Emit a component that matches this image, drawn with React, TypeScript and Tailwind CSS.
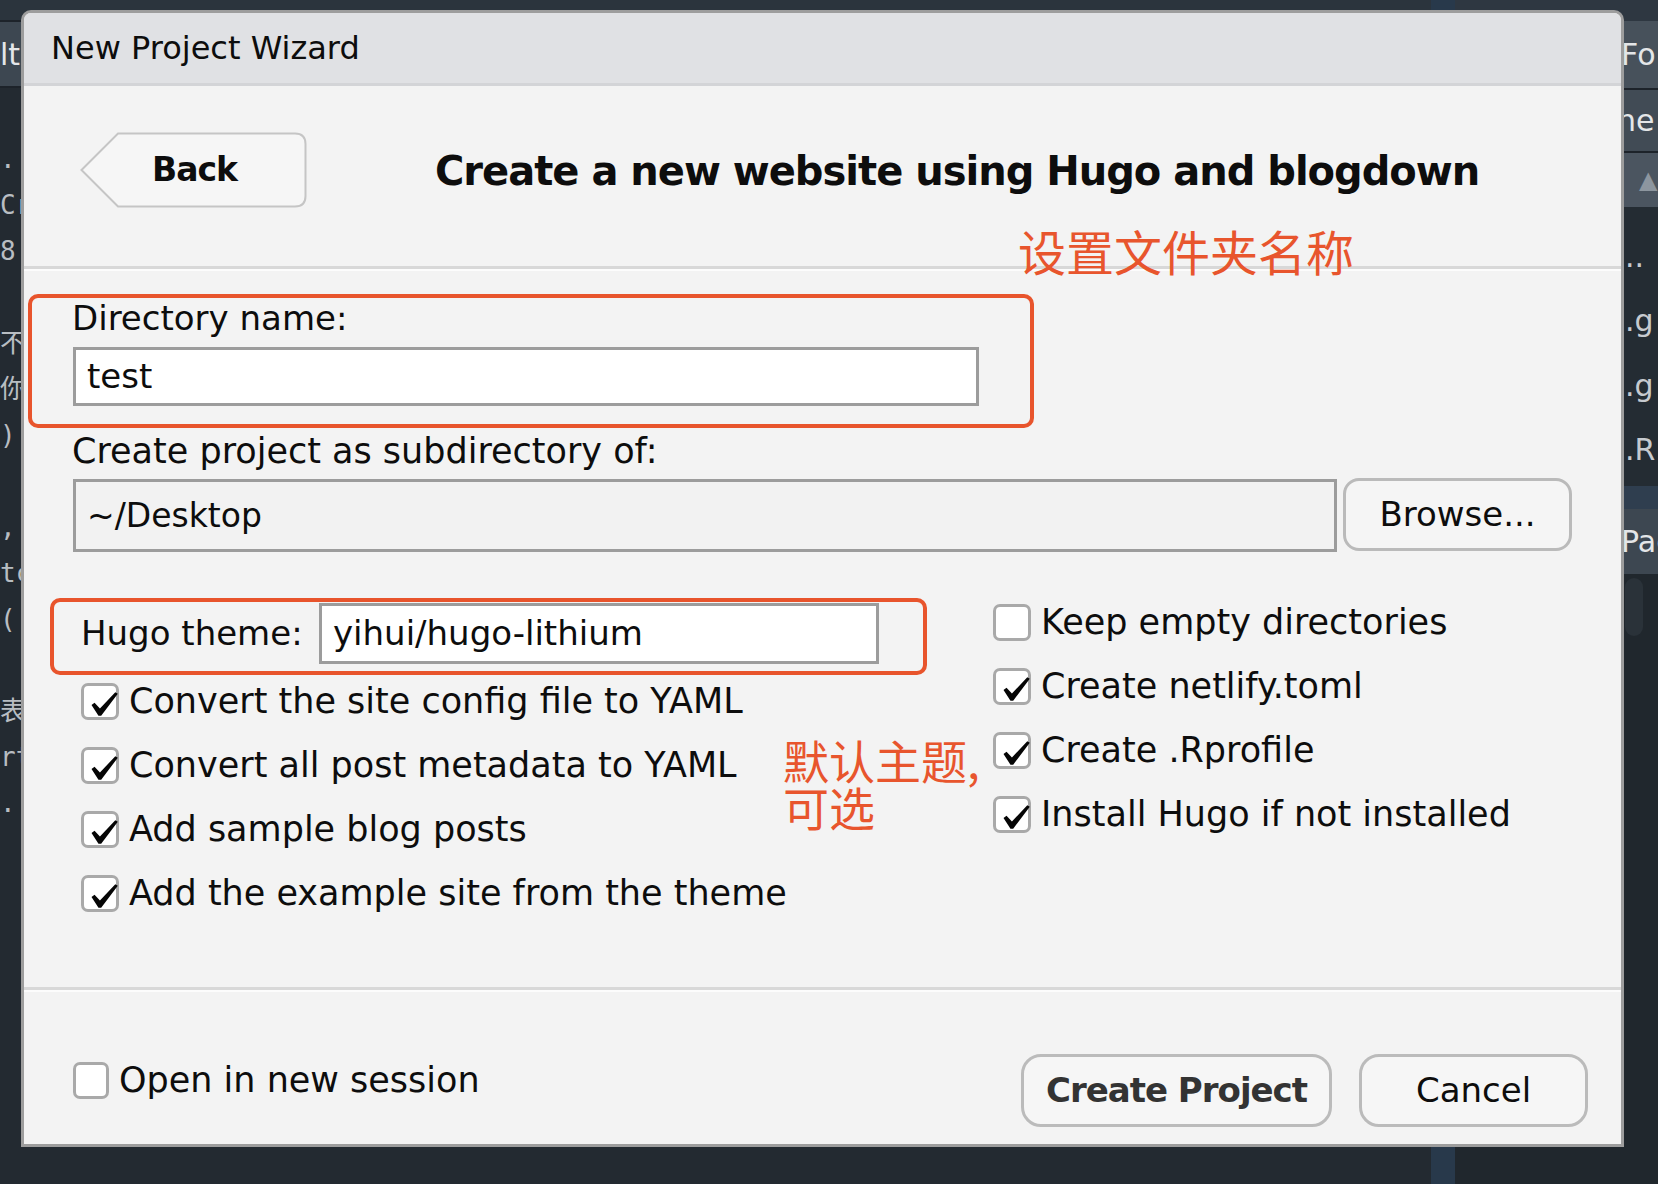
import React from 'react';

const SANS = "font-['DejaVu_Sans','Noto_Sans_CJK_SC',sans-serif]";
const CJK = "font-['Noto_Sans_CJK_SC',sans-serif]";
const MONO = "font-['DejaVu_Sans_Mono','Noto_Sans_CJK_SC',monospace]";

const CODE = ['.', 'Cr', '8', '', '不', '你', ')', '', ',', 'tc', '(', '', '表看', 'rt', '.'];
const LEFT_OPTS = [
  'Convert the site config file to YAML',
  'Convert all post metadata to YAML',
  'Add sample blog posts',
  'Add the example site from the theme',
];
const RIGHT_OPTS: [string, boolean][] = [
  ['Keep empty directories', false],
  ['Create netlify.toml', true],
  ['Create .Rprofile', true],
  ['Install Hugo if not installed', true],
];

function CheckBox({ checked, className }: { checked?: boolean; className?: string }) {
  return (
    <span className={`relative block h-[37px] shrink-0 rounded-[7px] border-[3px] border-[#a9a9a9] bg-white ${className ?? 'w-[38px]'}`}>
      {checked && (
        <svg viewBox="0 0 26 23" className="absolute left-[7px] top-[6px] h-[24px] w-[27px]">
          <path d="M0.5 12.5 L3.4 10.2 L8.6 15.8 L23.4 0.2 L25.8 1.6 L9.8 22.8 L7.2 22.8 Z" fill="#050505" />
        </svg>
      )}
    </span>
  );
}

function Option({ label, checked }: { label: string; checked: boolean }) {
  return (
    <div className="flex h-[50px] items-center gap-[10px]">
      <CheckBox checked={checked} />
      <span className="text-[35px] leading-[40px] whitespace-nowrap">{label}</span>
    </div>
  );
}

export default function App() {
  return (
    <div className={`relative h-[1184px] w-[1658px] overflow-hidden bg-[#20272d] ${SANS}`}>
      {/* RStudio behind the modal */}
      <div className="flex h-full">
        <div className="flex flex-1 flex-col">
          <div className="h-[20px] bg-[#2b343d]" />
          <div className="flex h-[68px] items-center border-y-2 border-[#1d232a] bg-[#3d4751] text-[30px] text-[#e4e6e8]">lt:</div>
          <div className={`flex-1 bg-[#232a31] pt-[48px] text-[26px] leading-[46px] text-[#b8bdc2] ${MONO}`}>
            {CODE.map((c, i) => (
              <div key={i} className="h-[46px] whitespace-pre">{c}</div>
            ))}
          </div>
        </div>
        <div className="w-[24px] bg-[#28394b]" />
        <div className="flex w-[203px] flex-col text-[30px] text-[#e4e6e8]">
          <div className="h-[21px] bg-[#2e3741]" />
          <div className="flex h-[67px] items-center bg-[#47515b] pl-[166px]">Fo</div>
          <div className="h-[2px] bg-[#1d232a]" />
          <div className="flex h-[61px] items-center bg-[#414b55] pl-[162px]">ne</div>
          <div className="h-[2px] bg-[#1d232a]" />
          <div className="flex h-[54px] items-center bg-[#4b5560] pl-[184px] text-[24px] text-[#8d969f]">▲</div>
          <div className="flex h-[279px] flex-col bg-[#242c33] pt-[22px] pl-[170px] text-[#c6cacf]">
            <div className="h-[66px] leading-[56px]">..</div>
            <div className="h-[66px] leading-[56px]">.g</div>
            <div className="h-[66px] leading-[56px]">.g</div>
            <div className="h-[66px] leading-[56px]">.R</div>
          </div>
          <div className="h-[23px] bg-[#2f3e4f]" />
          <div className="flex h-[65px] items-center bg-[#3d4751] pl-[166px]">Pac</div>
          <div className="flex-1 bg-[#20272d] pt-[4px] pl-[170px]">
            <div className="h-[58px] w-[18px] rounded-[9px] bg-[#2a3239]" />
          </div>
        </div>
      </div>

      {/* New Project Wizard dialog */}
      <div className="absolute left-[21px] top-[10px] flex h-[1137px] w-[1603px] flex-col overflow-hidden rounded-t-[10px] border-[3px] border-[#9d9d9d] bg-[#f3f3f3] text-[#0d0d0d]">
        <div className="flex h-[73px] shrink-0 items-center border-b-[3px] border-[#d3d4d7] bg-[#e0e1e4] pl-[27px] text-[32px]">
          New Project Wizard
        </div>

        <div className="relative flex h-[183px] shrink-0 items-start border-b-[3px] border-[#d8d8d8] pl-[56px] pt-[46px] shadow-[0_2px_0_0_#fcfcfc]">
          <button className="relative h-[76px] w-[227px] shrink-0">
            <svg viewBox="0 0 227 76" className="absolute inset-0 h-full w-full">
              <path d="M1.5 38 L38 1.5 H215 Q225.5 1.5 225.5 12 V64 Q225.5 74.5 215 74.5 H38 Z" fill="#f6f6f6" stroke="#c5c5c5" strokeWidth="2" />
            </svg>
            <span className="relative block pl-[2px] text-center text-[33px] font-bold leading-[76px] tracking-[-1px]">Back</span>
          </button>
          <h1 className="ml-[128px] whitespace-nowrap text-[40px] font-bold leading-[78px] tracking-[-1px]">
            Create a new website using Hugo and blogdown
          </h1>
          <span className={`absolute left-[994px] top-[140px] text-[48px] leading-[48px] text-[#e8552d] ${CJK}`}>设置文件夹名称</span>
        </div>

        <div className="relative flex h-[721px] shrink-0 flex-col border-b-[3px] border-[#d8d8d8] pt-[25px] shadow-[0_2px_0_0_#fcfcfc]">
          <div className="ml-[4px] w-[1006px] rounded-[10px] border-[4px] border-[#e8542c] pb-[18px] pl-[40px]">
            <div className="text-[34px] leading-[40px]">Directory name:</div>
            <div className="ml-[1px] mt-[9px] flex h-[59px] w-[906px] items-center border-[3px] border-[#9c9c9c] bg-white px-[11px] text-[34px]">
              test
            </div>
          </div>
          <div className="mt-[3px] pl-[48px] text-[35px] leading-[40px]">Create project as subdirectory of:</div>
          <div className="mt-[8px] flex items-start gap-[6px] pl-[49px]">
            <div className="flex h-[73px] w-[1264px] items-center border-[3px] border-[#9c9c9c] bg-[#f2f2f2] px-[11px] text-[33px]">
              ~/Desktop
            </div>
            <button className="-mt-[1px] h-[73px] w-[229px] rounded-[16px] border-[3px] border-[#bababa] bg-[#f5f5f5] text-[34px]">
              Browse...
            </button>
          </div>

          <div className="mt-[45px] flex items-start">
            <div className="ml-[26px] mt-[1px] flex w-[877px] flex-col">
              <div className="flex h-[77px] items-start rounded-[10px] border-[4px] border-[#e8542c] pl-[27px] pt-[1px]">
                <span className="w-[238px] text-[34px] leading-[61px]">Hugo theme:</span>
                <div className="flex h-[61px] w-[560px] items-center border-[3px] border-[#9c9c9c] bg-white px-[11px] text-[34px]">
                  yihui/hugo-lithium
                </div>
              </div>
              <div className="mt-[1px] flex flex-col gap-[14px] pl-[31px]">
                {LEFT_OPTS.map((o) => (
                  <Option key={o} label={o} checked />
                ))}
              </div>
            </div>
            <div className="ml-[66px] flex flex-col gap-[14px]">
              {RIGHT_OPTS.map(([o, c]) => (
                <Option key={o} label={o} checked={c} />
              ))}
            </div>
          </div>

          <div className={`absolute left-[759px] top-[467px] flex flex-col text-[46px] leading-[47px] text-[#e8552d] ${CJK}`}>
            <span>默认主题,</span>
            <span>可选</span>
          </div>
        </div>

        <div className="flex flex-1 items-start pl-[49px] pr-[33px] pt-[64px]">
          <div className="mt-[1px] flex h-[50px] items-center gap-[10px]">
            <CheckBox className="w-[36px]" />
            <span className="text-[35px] leading-[40px]">Open in new session</span>
          </div>
          <div className="ml-auto flex gap-[27px]">
            <button className="h-[73px] w-[311px] rounded-[20px] border-[3px] border-[#bbbbbb] bg-[#f6f6f6] text-[34px] font-bold tracking-[-1px] text-[#333]">
              Create Project
            </button>
            <button className="h-[73px] w-[229px] rounded-[20px] border-[3px] border-[#bbbbbb] bg-[#f6f6f6] text-[34px]">
              Cancel
            </button>
          </div>
        </div>
      </div>
    </div>
  );
}
